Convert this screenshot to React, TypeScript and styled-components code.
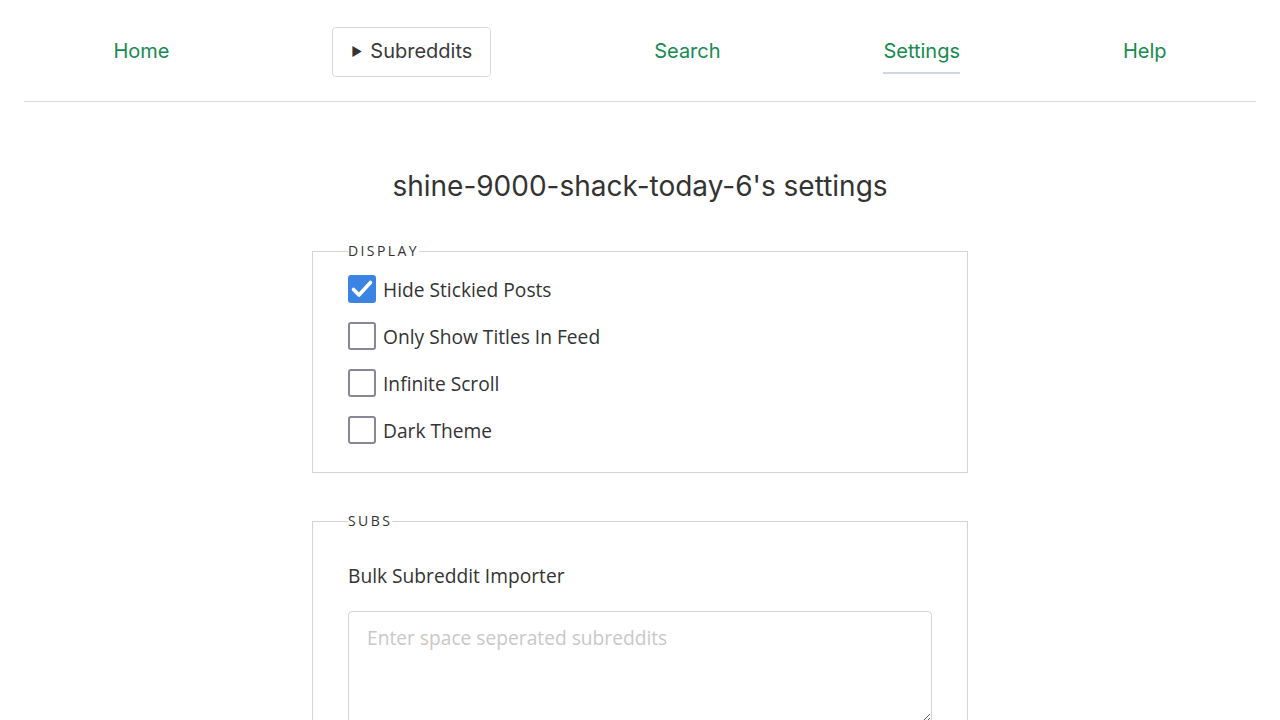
import React, { useState } from "react";
import styled, { createGlobalStyle } from "styled-components";

const GlobalStyle = createGlobalStyle`
  html, body { margin: 0; padding: 0; background: #ffffff; }
  body { font-family: "Open Sans", "Liberation Sans", sans-serif; color: #333333; }
  * { box-sizing: border-box; }
`;

const Page = styled.div`
  padding: 0 24px;
`;

const Nav = styled.nav`
  display: flex;
  justify-content: space-around;
  align-items: center;
  height: 102px;
  padding: 3px 8px 0;
  border-bottom: 1px solid #dcdcdc;
`;

const NavLink = styled.a<{ $active?: boolean }>`
  font-family: Inter, "Noto Sans", sans-serif;
  font-size: 20px;
  color: #178a50;
  text-decoration: none;
  line-height: 28px;
  padding: 5px 0 ${(p) => (p.$active ? "7px" : "8px")};
  border-bottom: ${(p) => (p.$active ? "2px solid #d2d6de" : "0")};
  margin-top: ${(p) => (p.$active ? "2px" : "0")};
`;

const MenuButton = styled.button`
  font-family: Inter, "Noto Sans", sans-serif;
  font-size: 20px;
  color: #3a3a3a;
  background: #fff;
  border: 1px solid #d6d8de;
  border-radius: 4px;
  height: 50px;
  padding: 0 18px 2px;
  display: flex;
  align-items: center;
  gap: 8px;
`;

const Caret = styled.span`
  font-size: 12px;
  color: #333;
`;

const Title = styled.h1`
  font-family: Inter, "Noto Sans", sans-serif;
  font-weight: 400;
  font-size: 28px;
  line-height: 40px;
  color: #333;
  text-align: center;
  margin: 64px 0 35px;
`;

const Fieldset = styled.fieldset`
  width: 656px;
  margin: 0 auto 38px;
  border: 1px solid #d4d4d8;
  padding: 14px 35px 28px;
  display: flex;
  flex-direction: column;
  gap: 19px;
`;

const Legend = styled.legend`
  font-family: "Open Sans", sans-serif;
  font-size: 14px;
  line-height: 20px;
  letter-spacing: 2.4px;
  text-transform: uppercase;
  color: #333;
  padding: 0;
`;

const Row = styled.label`
  display: flex;
  align-items: center;
  gap: 7px;
  height: 28px;
  font-size: 19.2px;
  color: #333;
  cursor: pointer;
`;

const Box = styled.span<{ $checked: boolean }>`
  width: 28px;
  height: 28px;
  flex: none;
  border-radius: 3px;
  border: 2px solid ${(p) => (p.$checked ? "#3b84e2" : "#8a8698")};
  background: ${(p) => (p.$checked ? "#3b84e2" : "#fff")};
  display: flex;
  align-items: center;
  justify-content: center;
`;

const SubLabel = styled.div`
  font-size: 19.2px;
  line-height: 28px;
  color: #333;
  margin-top: 17px;
`;

const TextArea = styled.textarea`
  width: 100%;
  height: 112px;
  border: 1px solid #d4d4d8;
  border-radius: 4px;
  padding: 12px 18px;
  font-family: "Open Sans", sans-serif;
  font-size: 19.2px;
  color: #333;
  margin-top: 2px;
  &::placeholder { color: #c8c8c8; }
`;

const items = [
  { key: "sticky", label: "Hide Stickied Posts", init: true },
  { key: "titles", label: "Only Show Titles In Feed", init: false },
  { key: "infinite", label: "Infinite Scroll", init: false },
  { key: "dark", label: "Dark Theme", init: false },
];

export default function App() {
  const [vals, setVals] = useState<Record<string, boolean>>(
    Object.fromEntries(items.map((i) => [i.key, i.init]))
  );
  return (
    <Page>
      <GlobalStyle />
      <Nav>
        <NavLink href="#">Home</NavLink>
        <MenuButton>
          <Caret>▶</Caret>
          Subreddits
        </MenuButton>
        <NavLink href="#">Search</NavLink>
        <NavLink href="#" $active>Settings</NavLink>
        <NavLink href="#">Help</NavLink>
      </Nav>
      <Title>shine-9000-shack-today-6's settings</Title>
      <Fieldset>
        <Legend>Display</Legend>
        {items.map((i) => (
          <Row key={i.key} onClick={() => setVals({ ...vals, [i.key]: !vals[i.key] })}>
            <Box $checked={vals[i.key]}>
              {vals[i.key] && (
                <svg width="24" height="24" viewBox="0 0 24 24">
                  <path d="M3.5 12.5 L9 18 L20.5 5.5" fill="none" stroke="#fff" strokeWidth="3.6" strokeLinecap="round" strokeLinejoin="round" />
                </svg>
              )}
            </Box>
            {i.label}
          </Row>
        ))}
      </Fieldset>
      <Fieldset>
        <Legend>Subs</Legend>
        <SubLabel>Bulk Subreddit Importer</SubLabel>
        <TextArea placeholder="Enter space seperated subreddits" />
      </Fieldset>
    </Page>
  );
}
